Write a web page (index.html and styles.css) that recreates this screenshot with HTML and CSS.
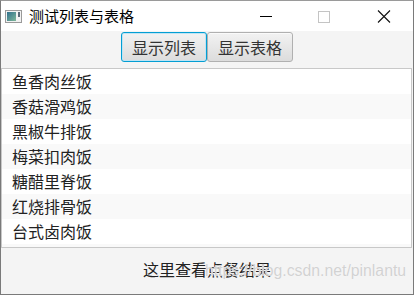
FILE: index.html
```html
<!DOCTYPE html>
<html lang="zh-CN">

<head>
    <meta charset="UTF-8">
    <meta name="viewport" content="width=device-width, initial-scale=1.0">
    <title>测试列表与表格</title>
    <link rel="stylesheet" href="styles.css">
</head>

<body>

    <div class="window">
        <div class="titlebar">
            <svg class="app-icon" width="17" height="13" viewBox="0 0 17 13">
                <defs>
                    <linearGradient id="pane" x1="0" y1="0" x2="1" y2="1">
                        <stop offset="0" stop-color="#2f6f8c" />
                        <stop offset="1" stop-color="#7fb89a" />
                    </linearGradient>
                </defs>
                <rect x="0.5" y="0.5" width="16" height="12" fill="#f2f2f2" stroke="#9a9a9a" />
                <rect x="2" y="2" width="9" height="9" fill="url(#pane)" />
                <rect x="13" y="2" width="2" height="5" fill="#5b6b78" />
            </svg>
            <div class="title">测试列表与表格</div>
            <div class="controls">
                <!-- 最小化 / 最大化 / 关闭 -->
                <svg class="ctl" width="46" height="30" viewBox="0 0 46 30">
                    <line x1="9" y1="15.5" x2="21" y2="15.5" stroke="#000" stroke-width="1" />
                </svg>
                <svg class="ctl" width="58" height="30" viewBox="0 0 58 30">
                    <rect x="21.5" y="10.5" width="11" height="11" fill="none" stroke="#c4c4c4" stroke-width="1" />
                </svg>
                <svg class="ctl" width="58" height="30" viewBox="0 0 58 30">
                    <path d="M23 9.5 L35 21.5 M35 9.5 L23 21.5" stroke="#111" stroke-width="1.1" />
                </svg>
            </div>
        </div>

        <div class="content">
            <div class="toolbar">
                <button class="btn focused">显示列表</button>
                <button class="btn">显示表格</button>
            </div>

            <div class="list">
                <div class="row">鱼香肉丝饭</div>
                <div class="row">香菇滑鸡饭</div>
                <div class="row">黑椒牛排饭</div>
                <div class="row">梅菜扣肉饭</div>
                <div class="row">糖醋里脊饭</div>
                <div class="row">红烧排骨饭</div>
                <div class="row">台式卤肉饭</div>
                <div class="row"></div>
            </div>

            <div class="result">这里查看点餐结果</div>
        </div>

        <div class="watermark">https://blog.csdn.net/pinlantu</div>
    </div>

</body>

</html>
```

FILE: styles.css
```css
body {
    margin: 0;
    padding: 0;
    font-family: "Noto Sans CJK SC", "Noto Sans", sans-serif;
    background-color: #fff;
    color: #222;
}

.window {
    position: relative;
    width: 414px;
    height: 295px;
    box-sizing: border-box;
    border: 1px solid #7a7a7a;
    border-top-color: #9a9a9a;
    display: flex;
    flex-direction: column;
    overflow: hidden;
}

.titlebar {
    height: 30px;
    background-color: #fff;
    display: flex;
    align-items: center;
}

.app-icon {
    margin-left: 4px;
    margin-top: 1px;
}

.title {
    margin-left: 7px;
    font-size: 15px;
    line-height: 30px;
    color: #000;
}

.controls {
    margin-left: auto;
    display: flex;
}

.ctl {
    display: block;
}

.content {
    flex: 1;
    background-color: #f4f4f4;
    display: flex;
    flex-direction: column;
}

.toolbar {
    display: flex;
    justify-content: center;
    padding: 1px 0 6px 0;
}

.btn {
    width: 86px;
    height: 30px;
    padding: 0;
    margin: 0;
    font-family: "Noto Sans CJK SC", sans-serif;
    font-size: 16px;
    line-height: 28px;
    color: #333;
    background: linear-gradient(#f2f2f2, #dcdcdc);
    border: 1px solid #b0b0b0;
    border-radius: 3px;
    box-shadow: inset 0 1px 0 #fafafa;
}

.btn.focused {
    border-color: #039ed3;
    box-shadow: inset 0 0 0 1px #bfe4f4;
}

.list {
    height: 178px;
    margin-right: 1px;
    background-color: #fff;
    border: 1px solid #c8c8c8;
    overflow: hidden;
}

.row {
    height: 25px;
    line-height: 25px;
    padding-left: 10px;
    font-size: 16px;
    color: #222;
}

.row:nth-child(even) {
    background-color: #f9f9f9;
}

.result {
    flex: 1;
    display: flex;
    justify-content: center;
    align-items: center;
    padding-bottom: 5px;
    font-size: 16px;
    color: #222;
}

/* 图片水印 */
.watermark {
    position: absolute;
    left: 204px;
    top: 261px;
    font-family: "Liberation Sans", Arial, sans-serif;
    font-size: 15.8px;
    color: #d2d2d2;
    text-shadow: 0 0 1px #fff;
}
```
